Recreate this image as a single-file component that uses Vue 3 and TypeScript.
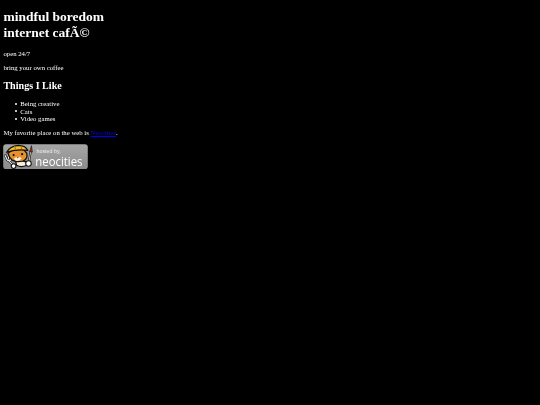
<script setup lang="ts">
const interests: string[] = ['Being creative', 'Cats', 'Video games']
</script>

<template>
  <main class="page">
    <h1 class="title">mindful boredom<br />internet cafÃ©</h1>
    <p class="para">open 24/7</p>
    <p class="para">bring your own coffee</p>
    <h2 class="subtitle">Things I Like</h2>
    <ul class="list">
      <li v-for="item in interests" :key="item" class="item">{{ item }}</li>
    </ul>
    <p class="para">My favorite place on the web is <a class="link" href="#">Neocities</a>.</p>
    <a class="badge" href="#" aria-label="hosted by neocities">
      <svg class="badge-art" viewBox="0 0 200 60" width="85" height="25.5">
        <defs>
          <linearGradient id="plate" x1="0" y1="0" x2="0" y2="1">
            <stop offset="0" stop-color="#a6a6a6" />
            <stop offset="1" stop-color="#8c8c8c" />
          </linearGradient>
        </defs>
        <rect x="0.5" y="0.5" width="199" height="59" rx="7" fill="url(#plate)" />
        <!-- fork -->
        <path d="M5 27 L10 37 M11 25 L14 36 M18 27 L18 37 M9 37 Q14 42 20 37 M14 40 L25 51" fill="none" stroke="#111" stroke-width="5" stroke-linecap="round" />
        <path d="M5 27 L10 37 M11 25 L14 36 M18 27 L18 37 M9 37 Q14 42 20 37 M14 40 L25 51" fill="none" stroke="#fff" stroke-width="2.4" stroke-linecap="round" />
        <circle cx="25" cy="52" r="5.5" fill="#fff" stroke="#111" stroke-width="2.5" />
        <!-- body -->
        <path d="M30 42 Q42 37 54 42 L56 50 Q43 56 32 50 Z" fill="#f4efe0" stroke="#111" stroke-width="3" />
        <!-- head -->
        <path d="M12 22 L22 14 L48 12 L56 22 Q59 35 47 40 Q33 44 22 38 Q14 32 12 22 Z" fill="#e8902c" stroke="#111" stroke-width="3" />
        <path d="M26 34 Q34 28 44 33 Q40 41 32 40 Q28 39 26 34 Z" fill="#fdf2d8" />
        <circle cx="25" cy="26" r="2.6" fill="#111" />
        <circle cx="45" cy="24" r="2.6" fill="#111" />
        <path d="M32 31 L37 31 L35 34 Z" fill="#7a2a1a" />
        <!-- hard hat -->
        <path d="M9 19 Q16 5 36 3 Q54 4 58 15 Q36 11 9 19 Z" fill="#f2bd2a" stroke="#111" stroke-width="3" />
        <path d="M27 5 L30 13 M42 4 L44 12" stroke="#a87a08" stroke-width="2.5" />
        <!-- paint brush -->
        <path d="M61 42 L65 18" stroke="#111" stroke-width="5" stroke-linecap="round" />
        <path d="M61 42 L65 18" stroke="#d8c8a8" stroke-width="2.2" />
        <path d="M63 18 L67 4 L69 19 Z" fill="#b8322a" stroke="#111" stroke-width="1.5" />
        <circle cx="60" cy="46" r="6.5" fill="#fff" stroke="#111" stroke-width="2.5" />
        <text class="hosted" x="79" y="20">hosted by,</text>
        <text class="neo" x="76" y="51" textLength="111" lengthAdjust="spacingAndGlyphs">neocities</text>
      </svg>
    </a>
  </main>
</template>

<style scoped>
.page {
  padding: 0 3.4px;
  color: #fff;
  font-family: "Liberation Serif", "Times New Roman", serif;
  font-size: 6.75px;
  line-height: 7.5px;
  filter: blur(0.15px);
}
.title {
  margin: 9px 0 10px;
  font-size: 13.5px;
  line-height: 15.5px;
  font-weight: 700;
}
.para {
  margin: 6.75px 0;
}
.subtitle {
  margin: 8.4px 0;
  font-size: 10.1px;
  line-height: 11.6px;
  font-weight: 700;
}
.list {
  margin: 6.75px 0;
  padding-left: 16.9px;
  list-style: none;
}
.item {
  display: flex;
  align-items: center;
  gap: 3px;
  margin-left: -5px;
}
.item::before {
  content: "";
  width: 2px;
  height: 2px;
  border-radius: 50%;
  background: #fff;
}
.link {
  color: #0000ee;
}
.badge {
  display: block;
  width: 85px;
  height: 25.5px;
  margin-top: 7px;
}
.badge-art {
  display: block;
}
.hosted {
  fill: #ececec;
  font-family: "Liberation Sans", Arial, sans-serif;
  font-size: 12.5px;
}
.neo {
  fill: #fff;
  font-family: "Open Sans", "Liberation Sans", sans-serif;
  font-size: 29px;
}
</style>

<style>
html,
body {
  margin: 0;
  background: #000;
}
</style>
